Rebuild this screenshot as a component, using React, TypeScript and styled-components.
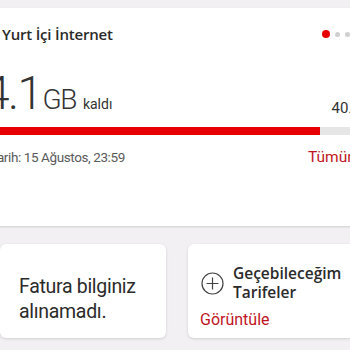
import React from "react";
import styled, { createGlobalStyle } from "styled-components";

const Global = createGlobalStyle`
  html, body { margin: 0; padding: 0; background: #f2f0f2; }
  body { font-family: "Open Sans", "Noto Sans", sans-serif; color: #333; }
`;

const Viewport = styled.div`
  width: 350px;
  height: 350px;
  overflow: hidden;
  background: #f2f0f2;
`;

const Page = styled.div`
  width: 430px;
  margin-left: -20px;
  padding-top: 8px;
  display: flex;
  flex-direction: column;
  gap: 18px;
`;

const TopCard = styled.section`
  background: #fff;
  height: 218px;
  box-sizing: border-box;
  padding: 14px 25px 0 12px;
  box-shadow: 0 1px 2px rgba(0, 0, 0, 0.14);
  display: flex;
  flex-direction: column;
`;

const TitleRow = styled.div`
  display: flex;
  align-items: center;
  justify-content: space-between;
  height: 24px;
`;

const Title = styled.h2`
  margin: 0 0 0 10px;
  font-family: "Open Sans", sans-serif;
  font-weight: 600;
  font-size: 15px;
  color: #2b2b2b;
  letter-spacing: -0.2px;
`;

const Dots = styled.div`
  display: flex;
  align-items: center;
  gap: 5px;
  margin-right: 35px;
`;

const Dot = styled.span<{ $active?: boolean }>`
  width: ${(p) => (p.$active ? 8 : 5)}px;
  height: ${(p) => (p.$active ? 8 : 5)}px;
  border-radius: 50%;
  background: ${(p) => (p.$active ? "#e60000" : "#cfcfcf")};
`;

const AmountRow = styled.div`
  display: flex;
  align-items: baseline;
  justify-content: space-between;
  margin-top: 20px;
  height: 40px;
`;

const Amount = styled.div`
  display: flex;
  align-items: baseline;
  margin-left: -8px;
`;

const BigNum = styled.span`
  font-family: Roboto, sans-serif;
  font-weight: 300;
  font-size: 46px;
  color: #333;
  letter-spacing: -1.5px;
`;

const Unit = styled.span`
  font-family: Roboto, sans-serif;
  font-weight: 300;
  font-size: 28px;
  color: #333;
  letter-spacing: -1.5px;
  margin-left: 1px;
`;

const Left = styled.span`
  font-family: Roboto, sans-serif;
  font-size: 14px;
  color: #333;
  margin-left: 7px;
`;

const Total = styled.span`
  font-family: Roboto, sans-serif;
  font-size: 15px;
  color: #333;
  position: relative;
  top: 4px;
  margin-right: 1px;
`;

const Track = styled.div`
  margin-top: 21px;
  height: 8px;
  background: #e6e6e6;
  display: flex;
`;

const Fill = styled.div`
  background: #e60000;
  height: 100%;
`;

const InfoRow = styled.div`
  display: flex;
  align-items: baseline;
  justify-content: space-between;
  margin-top: 13px;
`;

const DateText = styled.span`
  font-family: Roboto, sans-serif;
  font-size: 13.5px;
  letter-spacing: -0.4px;
  color: #5a5a5a;
  margin-left: -2px;
`;

const LinkText = styled.span`
  font-family: Roboto, sans-serif;
  font-size: 15.5px;
  color: #c0141f;
  margin-right: -6px;
`;

const BottomRow = styled.div`
  margin-left: 20px;
  display: grid;
  grid-template-columns: 166px 166px;
  gap: 22px;
`;

const SmallCard = styled.div`
  background: #fff;
  border-radius: 6px;
  height: 94px;
  box-sizing: border-box;
  box-shadow: 0 1px 3px rgba(0, 0, 0, 0.14);
`;

const BillCard = styled(SmallCard)`
  padding: 30px 10px 0 19px;
`;

const BillText = styled.p`
  margin: 0;
  font-family: Roboto, sans-serif;
  font-size: 19.5px;
  letter-spacing: -0.3px;
  line-height: 25px;
  color: #2b2b2b;
`;

const PlanCard = styled(SmallCard)`
  padding: 20px 8px 0 13px;
  display: flex;
  flex-direction: column;
`;

const PlanHead = styled.div`
  display: flex;
  align-items: center;
  gap: 9px;
`;

const PlanTitle = styled.span`
  font-weight: 600;
  font-size: 15.5px;
  line-height: 19px;
  color: #2b2b2b;
`;

const PlanLink = styled.span`
  margin-top: 8px;
  margin-left: -1px;
  font-family: Roboto, sans-serif;
  font-size: 16px;
  color: #c0141f;
`;

const PlusIcon = () => (
  <svg width="23" height="23" viewBox="0 0 23 23" fill="none" stroke="#444" strokeWidth="1.2">
    <circle cx="11.5" cy="11.5" r="10.5" />
    <path d="M11.5 5.5v12M5.5 11.5h12" />
  </svg>
);

export default function App() {
  const used = 0.835;
  return (
    <>
      <Global />
      <Viewport>
        <Page>
          <TopCard>
            <TitleRow>
              <Title>Yurt İçi İnternet</Title>
              <Dots>
                <Dot $active />
                <Dot />
                <Dot />
              </Dots>
            </TitleRow>
            <AmountRow>
              <Amount>
                <BigNum>4.1</BigNum>
                <Unit>GB</Unit>
                <Left>kaldı</Left>
              </Amount>
              <Total>40.0 GB</Total>
            </AmountRow>
            <Track>
              <Fill style={{ width: `${used * 100}%` }} />
            </Track>
            <InfoRow>
              <DateText>Tarih: 15 Ağustos, 23:59</DateText>
              <LinkText>Tümünü gör</LinkText>
            </InfoRow>
          </TopCard>
          <BottomRow>
            <BillCard>
              <BillText>
                Fatura bilginiz
                <br />
                alınamadı.
              </BillText>
            </BillCard>
            <PlanCard>
              <PlanHead>
                <PlusIcon />
                <PlanTitle>
                  Geçebileceğim
                  <br />
                  Tarifeler
                </PlanTitle>
              </PlanHead>
              <PlanLink>Görüntüle</PlanLink>
            </PlanCard>
          </BottomRow>
        </Page>
      </Viewport>
    </>
  );
}
